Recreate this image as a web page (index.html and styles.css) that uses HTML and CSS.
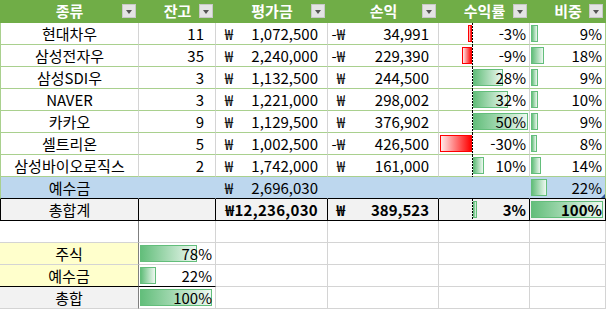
FILE: index.html
```html
<!DOCTYPE html>
<html lang="ko">
<head>
<meta charset="utf-8">
<title>포트폴리오</title>
<link rel="stylesheet" href="styles.css">
</head>
<body>
<div class="sheet">
  <div class="row head">
    <div class="c">종류<span class="fb"></span></div>
    <div class="c">잔고<span class="fb"></span></div>
    <div class="c">평가금<span class="fb"></span></div>
    <div class="c">손익<span class="fb"></span></div>
    <div class="c">수익률<span class="fb"></span></div>
    <div class="c">비중<span class="fb"></span></div>
  </div>

  <div class="row data">
    <div class="c name">현대차우</div>
    <div class="c qty">11</div>
    <div class="c acc"><span class="cur">₩</span><span>1,072,500</span></div>
    <div class="c acc"><span class="cur">-₩</span><span>34,991</span></div>
    <div class="c pct"><span class="axis"></span><span class="bar neg" style="width:4px"></span><span class="t">-3%</span></div>
    <div class="c pct"><span class="bar pos" style="width:7px"></span><span class="t">9%</span></div>
  </div>
  <div class="row data">
    <div class="c name">삼성전자우</div>
    <div class="c qty">35</div>
    <div class="c acc"><span class="cur">₩</span><span>2,240,000</span></div>
    <div class="c acc"><span class="cur">-₩</span><span>229,390</span></div>
    <div class="c pct"><span class="axis"></span><span class="bar neg" style="width:10px"></span><span class="t">-9%</span></div>
    <div class="c pct"><span class="bar pos" style="width:13px"></span><span class="t">18%</span></div>
  </div>
  <div class="row data">
    <div class="c name">삼성SDI우</div>
    <div class="c qty">3</div>
    <div class="c acc"><span class="cur">₩</span><span>1,132,500</span></div>
    <div class="c acc"><span class="cur">₩</span><span>244,500</span></div>
    <div class="c pct"><span class="axis"></span><span class="bar pos rate" style="width:30px"></span><span class="t">28%</span></div>
    <div class="c pct"><span class="bar pos" style="width:7px"></span><span class="t">9%</span></div>
  </div>
  <div class="row data">
    <div class="c name">NAVER</div>
    <div class="c qty">3</div>
    <div class="c acc"><span class="cur">₩</span><span>1,221,000</span></div>
    <div class="c acc"><span class="cur">₩</span><span>298,002</span></div>
    <div class="c pct"><span class="axis"></span><span class="bar pos rate" style="width:35px"></span><span class="t">32%</span></div>
    <div class="c pct"><span class="bar pos" style="width:7px"></span><span class="t">10%</span></div>
  </div>
  <div class="row data">
    <div class="c name">카카오</div>
    <div class="c qty">9</div>
    <div class="c acc"><span class="cur">₩</span><span>1,129,500</span></div>
    <div class="c acc"><span class="cur">₩</span><span>376,902</span></div>
    <div class="c pct"><span class="axis"></span><span class="bar pos rate" style="width:55px"></span><span class="t">50%</span></div>
    <div class="c pct"><span class="bar pos" style="width:7px"></span><span class="t">9%</span></div>
  </div>
  <div class="row data">
    <div class="c name">셀트리온</div>
    <div class="c qty">5</div>
    <div class="c acc"><span class="cur">₩</span><span>1,002,500</span></div>
    <div class="c acc"><span class="cur">-₩</span><span>426,500</span></div>
    <div class="c pct"><span class="axis"></span><span class="bar neg" style="width:32px"></span><span class="t">-30%</span></div>
    <div class="c pct"><span class="bar pos" style="width:6px"></span><span class="t">8%</span></div>
  </div>
  <div class="row data">
    <div class="c name">삼성바이오로직스</div>
    <div class="c qty">2</div>
    <div class="c acc"><span class="cur">₩</span><span>1,742,000</span></div>
    <div class="c acc"><span class="cur">₩</span><span>161,000</span></div>
    <div class="c pct"><span class="axis"></span><span class="bar pos rate" style="width:11px"></span><span class="t">10%</span></div>
    <div class="c pct"><span class="bar pos" style="width:10px"></span><span class="t">14%</span></div>
  </div>

  <div class="row dep">
    <div class="c name">예수금</div>
    <div class="c"></div>
    <div class="c acc"><span class="cur">₩</span><span>2,696,030</span></div>
    <div class="c"></div>
    <div class="c"></div>
    <div class="c pct"><span class="bar pos" style="width:16px"></span><span class="t">22%</span><span class="handle"></span></div>
  </div>

  <div class="row total">
    <div class="c name">총합계</div>
    <div class="c"></div>
    <div class="c acc b tight"><span>₩12,236,030</span></div>
    <div class="c acc b"><span class="cur">₩</span><span>389,523</span></div>
    <div class="c pct b"><span class="axis"></span><span class="bar pos rate" style="width:4px"></span><span class="t">3%</span></div>
    <div class="c pct b"><span class="bar pos" style="width:72px"></span><span class="t">100%</span></div>
  </div>

  <div class="row grid blank">
    <div class="c"></div><div class="c"></div><div class="c"></div><div class="c"></div><div class="c"></div><div class="c"></div>
  </div>
  <div class="row grid">
    <div class="c name lbl">주식</div>
    <div class="c pct"><span class="bar pos" style="width:57px"></span><span class="t">78%</span></div>
    <div class="c"></div><div class="c"></div><div class="c"></div><div class="c"></div>
  </div>
  <div class="row grid">
    <div class="c name lbl">예수금</div>
    <div class="c pct"><span class="bar pos" style="width:16px"></span><span class="t">22%</span></div>
    <div class="c"></div><div class="c"></div><div class="c"></div><div class="c"></div>
  </div>
  <div class="row grid sum">
    <div class="c name lbl">총합</div>
    <div class="c pct"><span class="bar pos" style="width:72px"></span><span class="t">100%</span></div>
    <div class="c"></div><div class="c"></div><div class="c"></div><div class="c"></div>
  </div>
</div>
</body>
</html>
```

FILE: styles.css
```css
* {
  box-sizing: border-box;
  margin: 0;
  padding: 0;
}

body {
  margin: 0;
  background: #ffffff;
  font-family: "Noto Sans CJK KR", "Noto Sans", sans-serif;
  font-size: 15px;
  color: #000000;
}

.sheet {
  width: 606px;
}

.row {
  display: grid;
  grid-template-columns: 139px 77px 112px 111px 91px 76px;
  height: 22px;
}

.c {
  position: relative;
  height: 22px;
  line-height: 21px;
  white-space: nowrap;
  border-right: 1px solid #d4d4d4;
  border-bottom: 1px solid #a9d08e;
}

/* header */
.head {
  height: 23px;
  background: #70ad47;
}

.head .c {
  height: 23px;
  line-height: 21px;
  border: none;
  color: #ffffff;
  font-weight: bold;
  text-align: center;
}

.fb {
  position: absolute;
  right: 3px;
  top: 4px;
  width: 14px;
  height: 14px;
  background: #e4e4e4;
  border: 1px solid #c8c8c8;
}

.fb::after {
  content: "";
  position: absolute;
  left: 3px;
  top: 5px;
  border-left: 3.5px solid transparent;
  border-right: 3.5px solid transparent;
  border-top: 4px solid #555555;
}

/* data rows */
.data .c:first-child,
.dep .c:first-child,
.total .c:first-child {
  border-left: 1px solid #a9d08e;
}

.data .c:last-child {
  border-right-color: #a9d08e;
}

.name {
  text-align: center;
}

.qty {
  text-align: right;
  padding-right: 11px;
}

.acc {
  display: flex;
  justify-content: space-between;
  padding-right: 9px;
}

.acc.tight {
  justify-content: flex-end;
  letter-spacing: 0.3px;
}

.cur {
  display: inline-block;
  width: 17px;
  text-align: right;
}

.pct {
  text-align: right;
  padding-right: 3px;
}

.t {
  position: relative;
}

.b {
  font-weight: bold;
}

/* data bars */
.bar {
  position: absolute;
  top: 2px;
  height: 17px;
}

.bar.pos {
  left: 1px;
  background: linear-gradient(to right, #63be7b 0%, #eef8f1 100%);
  border: 1px solid #63be7b;
}

.bar.pos.rate {
  left: 34px;
}

.bar.neg {
  right: 57px;
  background: linear-gradient(to right, #ffeaea 0%, #ff0000 100%);
  border: 1px solid #ff0000;
}

.axis {
  position: absolute;
  left: 33px;
  top: 0;
  bottom: -1px;
  width: 1px;
  background: repeating-linear-gradient(to bottom, #000 0 2px, transparent 2px 3px);
}

/* deposit row */
.dep .c {
  background: #bdd7ee;
  border-right-color: #bdd7ee;
  border-bottom-color: #000000;
}

.dep .c:last-child {
  border-right-color: #a9d08e;
}

.handle {
  position: absolute;
  right: 0;
  bottom: 0;
  width: 0;
  height: 0;
  border-left: 4px solid transparent;
  border-bottom: 4px solid #2f5597;
}

/* total row */
.total .c {
  background: #f2f2f2;
  border-right-color: #000000;
  border-bottom-color: #000000;
}

.total .c:first-child {
  border-left-color: #000000;
}

/* plain grid below */
.grid .c {
  border-right-color: #d4d4d4;
  border-bottom-color: #d4d4d4;
}

.grid .c:first-child {
  border-right-color: #7f7f7f;
}

.lbl {
  background: #ffffcc;
}

.row.grid:nth-last-child(2) .c:nth-child(-n+2) {
  border-bottom-color: #000000;
}

.sum .lbl {
  background: #f2f2f2;
}
```
